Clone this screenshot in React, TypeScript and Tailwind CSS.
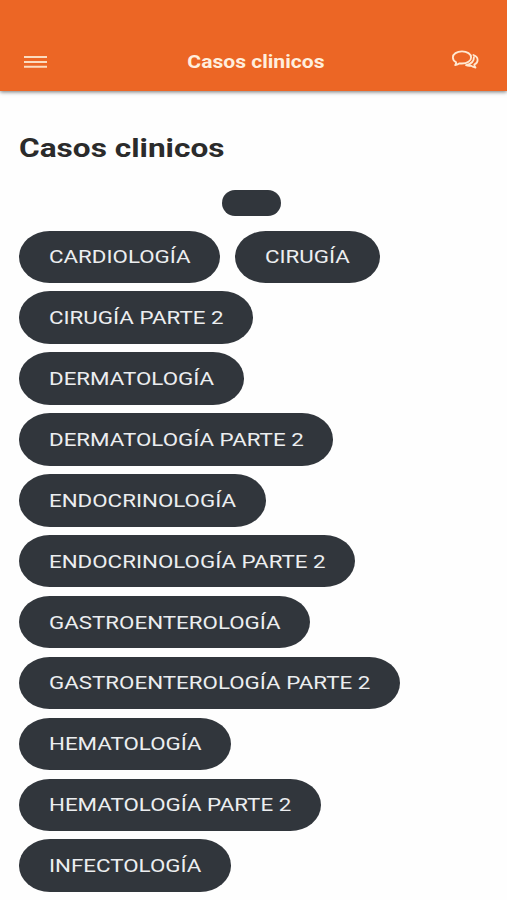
const rows: { label: string; width: string }[][] = [
  [
    { label: "CARDIOLOGÍA", width: "w-[201px]" },
    { label: "CIRUGÍA", width: "w-[145px]" },
  ],
  [{ label: "CIRUGÍA PARTE 2", width: "w-[234px]" }],
  [{ label: "DERMATOLOGÍA", width: "w-[224.5px]" }],
  [{ label: "DERMATOLOGÍA PARTE 2", width: "w-[314px]" }],
  [{ label: "ENDOCRINOLOGÍA", width: "w-[246.5px]" }],
  [{ label: "ENDOCRINOLOGÍA PARTE 2", width: "w-[336px]" }],
  [{ label: "GASTROENTEROLOGÍA", width: "w-[291px]" }],
  [{ label: "GASTROENTEROLOGÍA PARTE 2", width: "w-[380.5px]" }],
  [{ label: "HEMATOLOGÍA", width: "w-[212px]" }],
  [{ label: "HEMATOLOGÍA PARTE 2", width: "w-[301.5px]" }],
  [{ label: "INFECTOLOGÍA", width: "w-[212px]" }],
];

function MenuIcon() {
  return (
    <svg width="23" height="14" viewBox="0 0 23 14" fill="none" stroke="#fbdcc0" strokeWidth="2">
      <path d="M0 2H23M0 6.9H23M0 11.8H23" />
    </svg>
  );
}

function ChatIcon() {
  return (
    <svg width="28" height="20" viewBox="0 0 28 20" fill="none" stroke="#ffe9d2" strokeWidth="1.8" strokeLinejoin="round" strokeLinecap="round">
      <path d="M11 1.4C5.8 1.4 1.9 4 1.9 7.4C1.9 9.5 3.1 11.2 5.1 12.3C5.1 13.3 4.8 14.3 4.2 15C5.9 14.8 7.5 14.2 8.6 13.3C9.4 13.4 10.2 13.5 11 13.5C16.2 13.5 20.1 10.8 20.1 7.4C20.1 4 16.2 1.4 11 1.4Z" />
      <path d="M22.4 5C25 5.9 26.6 7.7 26.6 9.9C26.6 11.8 25.4 13.5 23.3 14.5C23.3 15.7 23.8 16.8 24.5 17.6C22.5 17.3 21 16.7 19.9 15.7C18.1 16 16.4 15.8 15 15.2C20 13.9 23.1 10.9 22.9 7.2" />
    </svg>
  );
}

export default function App() {
  return (
    <div className="h-[900px] w-full overflow-hidden bg-[#fefefe] font-[Roboto,sans-serif]">
      <header className="flex h-[91px] items-end justify-between bg-[#ec6625] pr-[28px] pl-6 shadow-[0_1px_4px_rgba(0,0,0,0.55)]">
        <button className="mb-[22px] flex w-[36px]" aria-label="Menu">
          <MenuIcon />
        </button>
        <div className="mb-[17px] flex h-6 items-center justify-center text-[17.5px] font-bold text-[#ffeedd]">
          <span className="scale-x-[1.205] whitespace-nowrap">Casos clinicos</span>
        </div>
        <button className="mb-[21px] flex" aria-label="Chat">
          <ChatIcon />
        </button>
      </header>
      <main className="pl-[19px]">
        <h1 className="flex h-[99px] pt-[40px] text-[26px] leading-[34px] font-bold text-[#2b2b2b]">
          <span className="origin-left scale-x-[1.215] whitespace-nowrap">Casos clinicos</span>
        </h1>
        <div className="ml-[202.5px] h-[25.5px] w-[59.5px] rounded-full bg-[#31363c]" />
        <div className="mt-[15px] flex flex-col gap-[8.4px]">
          {rows.map((row) => (
            <div key={row[0].label} className="flex gap-[15px]">
              {row.map((item) => (
                <button
                  key={item.label}
                  className={`flex h-[52.5px] items-center rounded-[31px/26.25px] bg-[#31363c] pt-[1.5px] pl-[29.5px] text-[19px] text-[#eceef0] ${item.width}`}
                >
                  <span className="origin-left scale-x-[1.175] whitespace-nowrap">{item.label}</span>
                </button>
              ))}
            </div>
          ))}
        </div>
      </main>
    </div>
  );
}
